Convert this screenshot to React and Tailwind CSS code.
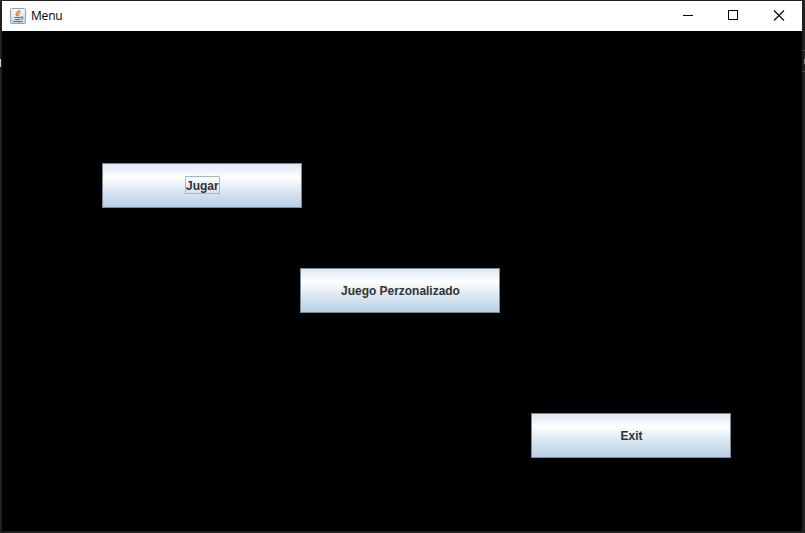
function JavaIcon() {
  return (
    <svg width="16" height="16" viewBox="0 0 16 16" fill="none">
      <defs>
        <linearGradient id="tile" x1="0" y1="0" x2="0" y2="1">
          <stop offset="0" stopColor="#f4f7fa" />
          <stop offset="0.5" stopColor="#e2eaf0" />
          <stop offset="1" stopColor="#bccddb" />
        </linearGradient>
      </defs>
      <rect x="0.5" y="0.5" width="15" height="15" rx="1" fill="url(#tile)" stroke="#8fa5b5" />
      <path d="M9.3 2C9.7 3.7 6 4.2 6.3 6C6.5 6.9 7.2 7.3 7.5 8" stroke="#e0762a" strokeWidth="1.6" />
      <path d="M10.8 4C9 4.8 8.2 5.4 8.7 6.4C9 7 8.9 7.5 8.3 8" stroke="#e48a3f" strokeWidth="1.3" />
      <path d="M4.5 9.5H11M5 11.5H10M3.5 13.5H12" stroke="#4f7592" strokeWidth="1" />
      <path d="M11 8.8C13.8 8.3 13.2 10.8 11 11.3" stroke="#5b7f9a" strokeWidth="1.1" />
    </svg>
  );
}

function TitleBar() {
  return (
    <header className="flex h-[30px] shrink-0 items-start bg-white text-black">
      <div className="flex h-[29px] grow items-center pl-2">
        <JavaIcon />
        <h1 className="ml-[5px] pt-px text-[12px] leading-4 tracking-[-0.2px] font-['Open_Sans','Noto_Sans',sans-serif]">
          Menu
        </h1>
      </div>
      <button className="flex h-[29px] w-[45px] items-center justify-center" aria-label="Minimize">
        <svg width="11" height="11" shapeRendering="crispEdges">
          <path d="M0 5.5H10" stroke="currentColor" />
        </svg>
      </button>
      <button className="flex h-[29px] w-[45px] items-center justify-center" aria-label="Maximize">
        <svg width="11" height="11" shapeRendering="crispEdges">
          <rect x="0.5" y="0.5" width="9" height="9" fill="none" stroke="currentColor" />
        </svg>
      </button>
      <button className="flex h-[29px] w-[46px] items-center justify-center" aria-label="Close">
        <svg width="12" height="11">
          <path d="M1 0.5L11 10.5M11 0.5L1 10.5" stroke="currentColor" strokeWidth="1.1" />
        </svg>
      </button>
    </header>
  );
}

function MetalButton({ label, focused = false }) {
  return (
    <button className="flex h-[45px] w-[200px] shrink-0 items-center justify-center border border-[#7a8a99] bg-[linear-gradient(to_bottom,#dde8f3_0%,#ffffff_30%,#dde8f3_60%,#b8cfe5_100%)] text-[12px] font-bold leading-4 text-[#333333] font-['Liberation_Sans',Arial,sans-serif]">
      {focused ? (
        <span className="mb-px ml-px h-[18px] w-[35px] border border-[#a3b8cc] pt-px text-left leading-4">
          {label}
        </span>
      ) : (
        <span className="ml-px tracking-[-0.03px]">{label}</span>
      )}
    </button>
  );
}

export default function App() {
  return (
    <div className="flex h-[533px] w-[805px] overflow-hidden bg-[#201f21]">
      <div className="w-0.5 shrink-0 pt-[59px]">
        <div className="h-2 w-px bg-[#c8c8c8]" />
      </div>
      <div className="mt-px flex h-[530px] w-[800px] shrink-0 flex-col bg-black">
        <TitleBar />
        <main className="flex grow flex-col items-start pt-[132px]">
          <div className="pl-[100px]">
            <MetalButton label="Jugar" focused />
          </div>
          <div className="pt-[60px] pl-[298px]">
            <MetalButton label="Juego Perzonalizado" />
          </div>
          <div className="pt-[100px] pl-[529px]">
            <MetalButton label="Exit" />
          </div>
        </main>
      </div>
      <div className="flex w-[3px] shrink-0 flex-col items-end pt-[50px]">
        <div className="h-px w-[3px] bg-[#48474a]" />
        <div className="mt-2 h-[5px] w-px bg-[#808080]" />
        <div className="mt-[7px] h-px w-[3px] bg-[#48474a]" />
      </div>
    </div>
  );
}
